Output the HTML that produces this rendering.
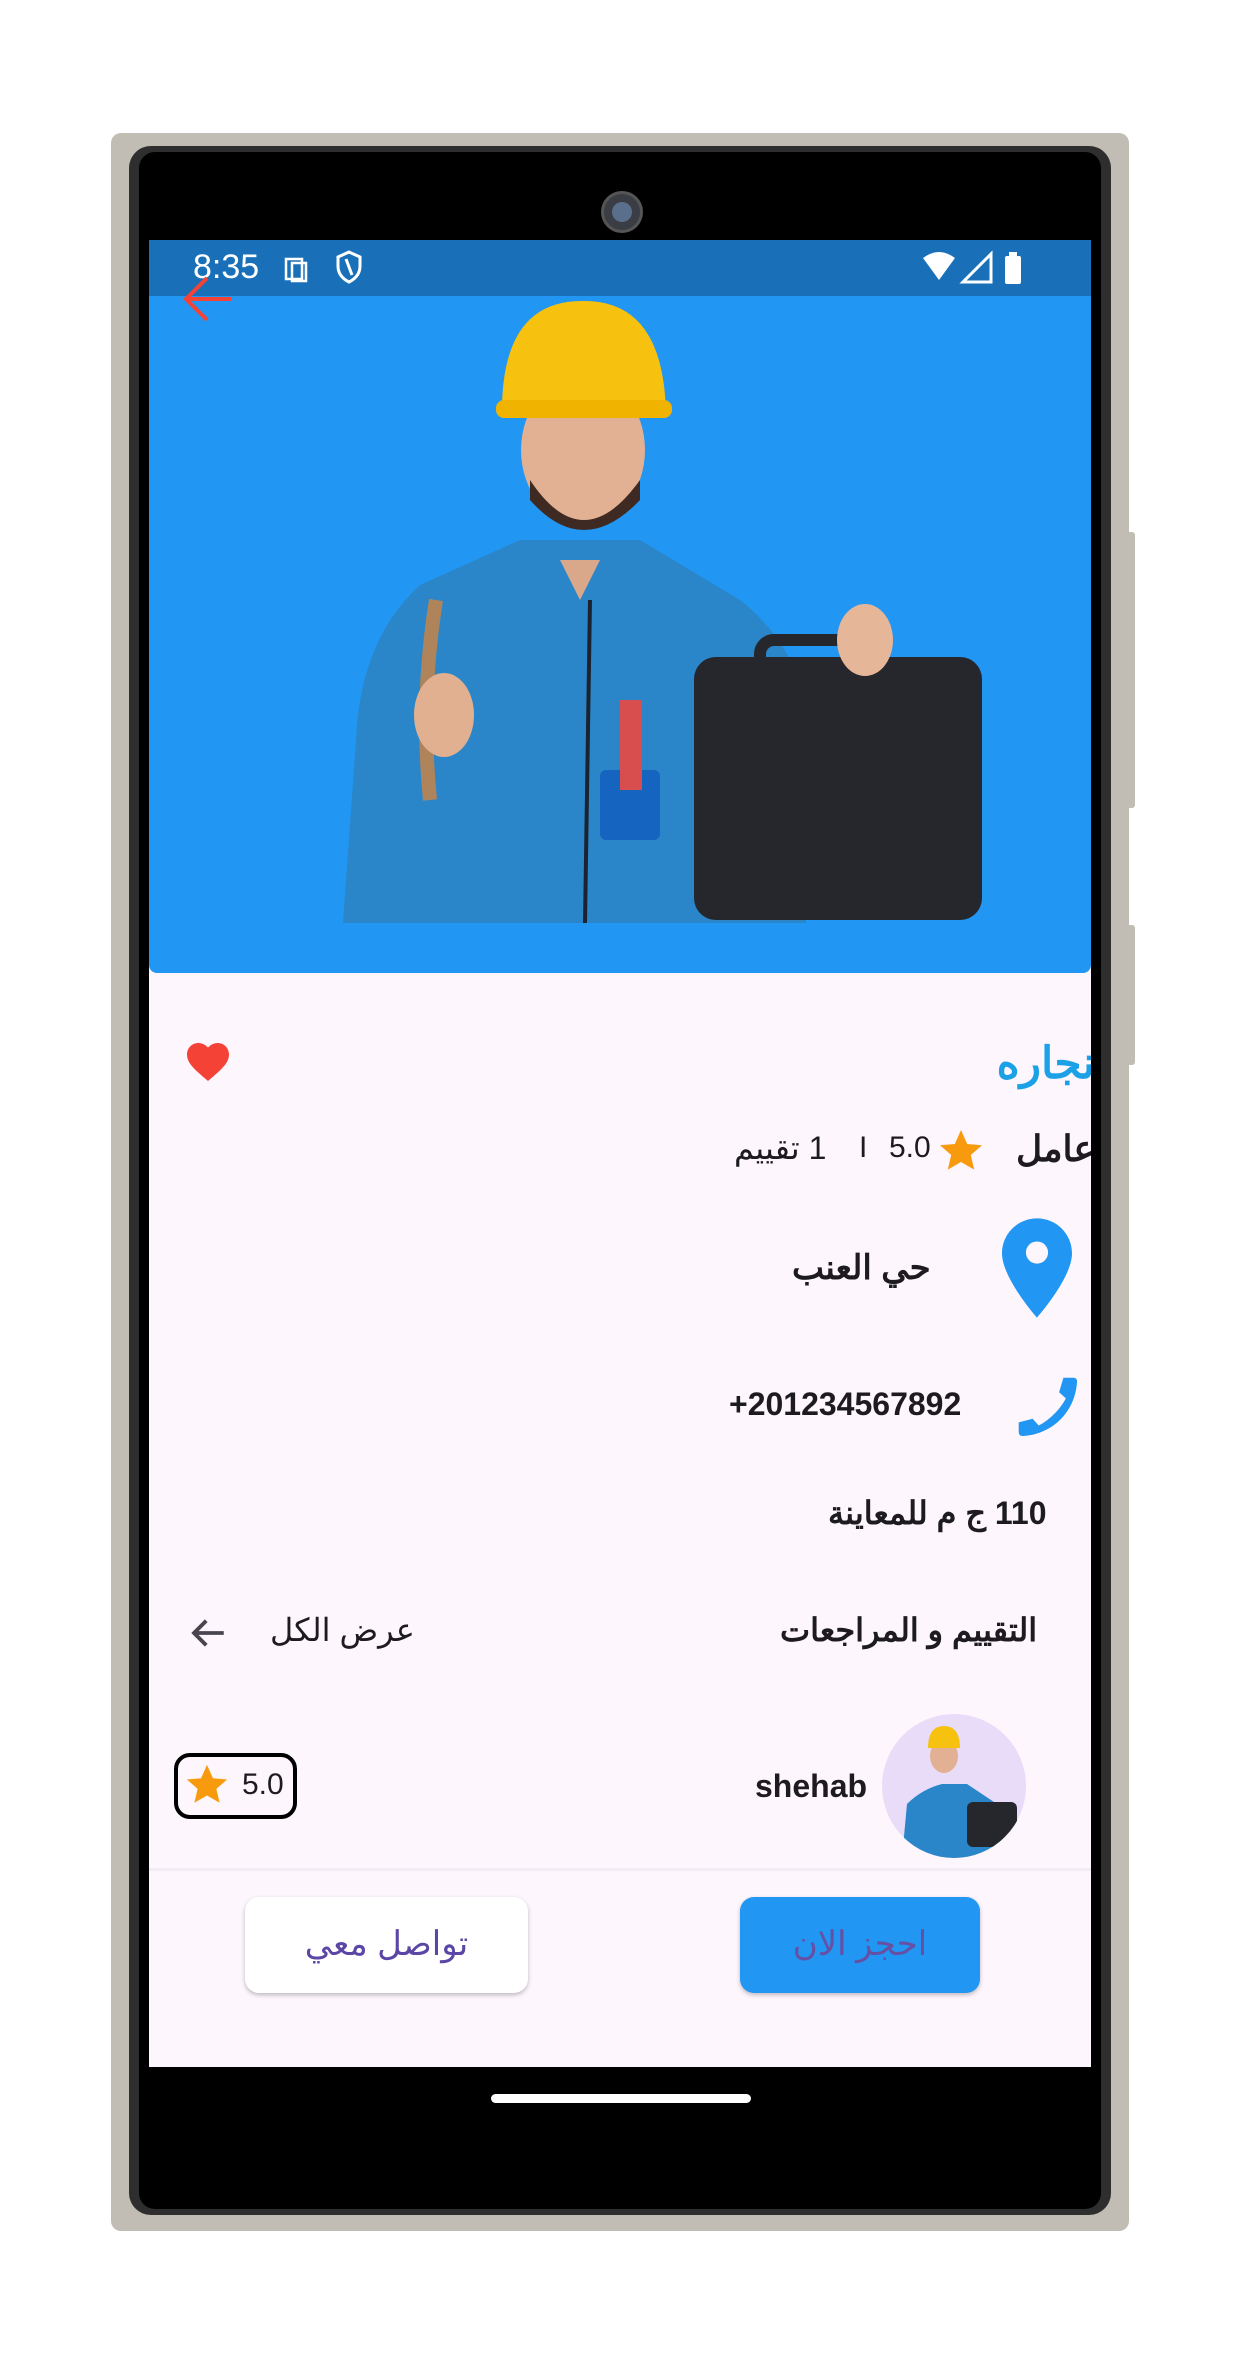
<!DOCTYPE html>
<html><head><meta charset="utf-8"><style>
*{margin:0;padding:0;box-sizing:border-box}
body{width:1245px;height:2359px;background:#fff;position:relative;overflow:hidden;font-family:"Liberation Sans","Noto Sans CJK SC",sans-serif}
.a{position:absolute}
.t{position:absolute;white-space:nowrap;color:#1d1b20;direction:rtl}
</style></head><body>
<div class="a" style="left:111px;top:133px;width:1018px;height:2098px;background:#c2bdb4;border-radius:10px"></div>
<div class="a" style="left:1127px;top:532px;width:8px;height:276px;background:#c2bdb4;border-radius:3px"></div>
<div class="a" style="left:1127px;top:925px;width:8px;height:140px;background:#c2bdb4;border-radius:3px"></div>
<div class="a" style="left:129px;top:146px;width:982px;height:2069px;background:#2e2e2e;border-radius:22px"></div>
<div class="a" style="left:139px;top:152px;width:962px;height:2057px;background:#000;border-radius:16px"></div>
<div class="a" style="left:601px;top:191px;width:42px;height:42px;border-radius:50%;background:#3a3d44;border:3px solid #555"></div>
<div class="a" style="left:612px;top:202px;width:20px;height:20px;border-radius:50%;background:#5a6f8c"></div>
<!-- screen -->
<div class="a" style="left:149px;top:240px;width:942px;height:1827px;background:#fdf6fd;overflow:hidden">
  <div class="a" style="left:0;top:0;width:942px;height:733px;background:#2196f3;border-radius:0 0 8px 8px"></div>
  <div class="a" style="left:0;top:0;width:942px;height:56px;background:#1a70b8"></div>
  <div class="a" style="left:44px;top:8px;color:#fff;font-size:34px">8:35</div>
  <svg class="a" style="left:133px;top:14px" width="30" height="30" viewBox="0 0 30 30" fill="none" stroke="#fff" stroke-width="2.5"><rect x="4" y="5" width="16" height="20"/><rect x="10" y="9" width="14" height="18"/></svg>
  <svg class="a" style="left:186px;top:10px" width="28" height="34" viewBox="0 0 28 34" fill="none" stroke="#fff" stroke-width="3"><path d="M14 2L3 7v9c0 8 5 13 11 16 6-3 11-8 11-16V7z"/><path d="M11 9l6 16"/></svg>
  <svg class="a" style="left:772px;top:10px" width="110" height="36" viewBox="0 0 110 36"><path d="M2 8Q18-4 34 8L18 30z" fill="#fff"/><path d="M70 4L70 32 42 32z" fill="none" stroke="#fff" stroke-width="3"/><rect x="84" y="6" width="16" height="28" rx="2" fill="#fff"/><rect x="88" y="2" width="8" height="5" fill="#fff"/></svg>
  <svg class="a" style="left:34px;top:36px" width="50" height="46" viewBox="0 0 50 46" fill="none" stroke="#f44336" stroke-width="4"><path d="M48 23H4M24 2L3 23l21 21"/></svg>
  <!-- worker illustration -->
  <svg class="a" style="left:0;top:0" width="942" height="733" viewBox="149 240 942 733">
    <path d="M343 923L356 740Q360 640 420 585L520 540L640 540L740 600Q790 640 806 700L806 923z" fill="#2a86c8"/>
    <path d="M560 560L580 600L600 560Z" fill="#d9a88a"/>
    <line x1="590" y1="600" x2="585" y2="923" stroke="#1b2330" stroke-width="4"/>
    <rect x="600" y="770" width="60" height="70" rx="6" fill="#1565c0"/>
    <rect x="620" y="700" width="22" height="90" fill="#d84d4d"/>
    <path d="M436 600Q420 700 430 800" stroke="#b0845a" stroke-width="14" fill="none"/>
    <ellipse cx="444" cy="715" rx="30" ry="42" fill="#e0b090"/>
    <rect x="694" y="657" width="288" height="263" rx="22" fill="#25272c"/>
    <rect x="760" y="640" width="110" height="40" rx="14" fill="none" stroke="#25272c" stroke-width="12"/>
    <ellipse cx="865" cy="640" rx="28" ry="36" fill="#e6b699"/>
    <ellipse cx="583" cy="450" rx="62" ry="75" fill="#e2b193"/>
    <path d="M530 480Q583 560 640 480L640 500Q583 560 530 500Z" fill="#3e2a22"/>
    <path d="M502 417Q500 300 583 301Q665 300 666 417Z" fill="#f6c20f"/>
    <rect x="496" y="400" width="176" height="18" rx="8" fill="#f0b400"/>
  </svg>
  <!-- content -->
  <svg class="a" style="left:35px;top:799px" width="48" height="44" viewBox="0 0 24 22"><path d="M12 21l-1.5-1.3C5 15 1.5 11.8 1.5 7.8 1.5 4.5 4 2 7.2 2c1.8 0 3.6.9 4.8 2.3C13.2 2.9 15 2 16.8 2 20 2 22.5 4.5 22.5 7.8c0 4-3.5 7.2-9 11.9z" fill="#f44336"/></svg>
  <div class="t" style="right:-4px;top:798px;font-size:44px;font-weight:bold;color:#1da1e6">نجاره</div>
  <div class="t" style="right:-4px;top:888px;font-size:36px;font-weight:bold">عامل</div>
  <svg class="a" style="left:788px;top:888px" width="48" height="46" viewBox="0 0 24 23"><path d="M12 1l3.1 7 7.4.6-5.6 4.9 1.7 7.3L12 17l-6.6 3.8 1.7-7.3L1.5 8.6 8.9 8z" fill="#f89a0e"/></svg>
  <div class="a" style="left:740px;top:891px;font-size:30px;color:#1d1b20">5.0</div>
  <div class="a" style="left:710px;top:891px;font-size:30px;color:#1d1b20">I</div>
  <div class="t" style="left:585px;top:889px;font-size:32px">1 تقييم</div>
  <svg class="a" style="left:853px;top:978px" width="70" height="100" viewBox="0 0 24 34"><path d="M12 0C5.4 0 0 5.3 0 12c0 8.5 12 22 12 22s12-13.5 12-22C24 5.3 18.6 0 12 0zm0 15.5a3.8 3.8 0 110-7.6 3.8 3.8 0 010 7.6z" fill="#2196f3"/></svg>
  <div class="t" style="left:643px;top:1008px;font-size:34px;font-weight:bold">حي العنب</div>
  <svg class="a" style="left:862px;top:1130px" width="74" height="74" viewBox="0 0 24 24"><path d="M20 2.5c1.2 0 1.5.5 1.4 1.6C20.7 13.6 13.6 20.7 4.1 21.4 3 21.5 2.5 21 2.5 20v-3l4.5-1.2 2 2.2c3.5-1.8 7-5.3 8.8-8.8l-2.2-2L17 2.5z" fill="#2196f3"/></svg>
  <div class="a" style="left:580px;top:1146px;font-size:32px;font-weight:bold;color:#1d1b20">+201234567892</div>
  <div class="t" style="left:679px;top:1254px;font-size:32px;font-weight:bold">110 ج م للمعاينة</div>
  <div class="t" style="left:631px;top:1371px;font-size:32px;font-weight:bold">التقييم و المراجعات</div>
  <div class="t" style="left:121px;top:1371px;font-size:32px">عرض الكل</div>
  <svg class="a" style="left:38px;top:1372px" width="42" height="42" viewBox="0 0 24 24" fill="none" stroke="#49454f" stroke-width="2.2"><path d="M21 12H4M11 5l-7 7 7 7"/></svg>
  <div class="a" style="left:733px;top:1474px;width:144px;height:144px;border-radius:50%;background:#e8dcf9;overflow:hidden">
    <svg width="144" height="144" viewBox="0 0 144 144"><path d="M20 144L25 90Q40 75 60 70H85L115 90L125 144z" fill="#2a86c8"/><rect x="85" y="88" width="50" height="45" rx="6" fill="#25272c"/><ellipse cx="62" cy="42" rx="14" ry="17" fill="#e2b193"/><path d="M46 34Q46 12 62 12Q78 12 78 34Z" fill="#f6c20f"/></svg>
  </div>
  <div class="a" style="left:606px;top:1528px;font-size:32px;font-weight:bold;color:#1d1b20">shehab</div>
  <div class="a" style="left:25px;top:1513px;width:123px;height:66px;border:4px solid #000;border-radius:16px"></div>
  <svg class="a" style="left:35px;top:1523px" width="46" height="44" viewBox="0 0 24 23"><path d="M12 1l3.1 7 7.4.6-5.6 4.9 1.7 7.3L12 17l-6.6 3.8 1.7-7.3L1.5 8.6 8.9 8z" fill="#f89a0e"/></svg>
  <div class="a" style="left:93px;top:1528px;font-size:30px;color:#1d1b20">5.0</div>
  <div class="a" style="left:0;top:1628px;width:942px;height:3px;background:#f1ecf3"></div>
  <div class="a" style="left:96px;top:1657px;width:283px;height:96px;background:#fff;border-radius:14px;box-shadow:0 2px 4px rgba(0,0,0,.25);text-align:center;line-height:94px;font-size:34px;color:#5b46a6;direction:rtl">تواصل معي</div>
  <div class="a" style="left:591px;top:1657px;width:240px;height:96px;background:#2196f3;border-radius:14px;box-shadow:0 2px 4px rgba(0,0,0,.25);text-align:center;line-height:94px;font-size:34px;color:#6750a4;direction:rtl">احجز الان</div>
</div>
<div class="a" style="left:491px;top:2094px;width:260px;height:9px;border-radius:5px;background:#fff"></div>
</body></html>
